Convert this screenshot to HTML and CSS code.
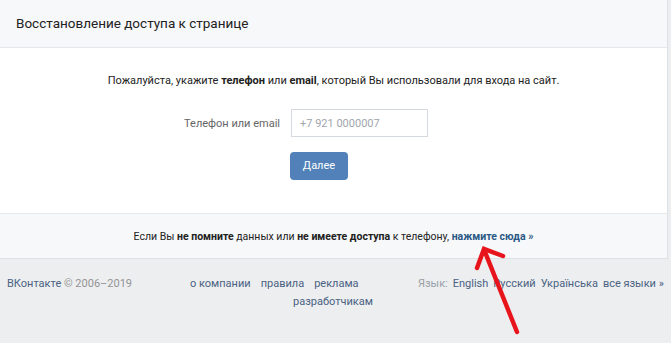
FILE: index.html
```html
<!DOCTYPE html>
<html lang="ru">
<head>
<meta charset="utf-8">
<link rel="stylesheet" href="styles.css">
</head>
<body>
<div class="page">
  <div class="card">
    <div class="card-header">Восстановление доступа к странице</div>
    <div class="card-body">
      <p class="intro">Пожалуйста, укажите <b>телефон</b> или <b>email</b>, который Вы использовали для входа на сайт.</p>
      <div class="form-row">
        <label class="form-label">Телефон или email</label>
        <div class="form-input">+7 921 0000007</div>
      </div>
      <div class="btn-row">
        <span class="btn">Далее</span>
      </div>
    </div>
    <div class="card-note">Если Вы <b>не помните</b> данных или <b>не имеете доступа</b> к телефону, <a class="note-link">нажмите сюда »</a></div>
  </div>
  <div class="footer">
    <div class="copy"><a class="flink">ВКонтакте</a> © 2006–2019</div>
    <div class="links">
      <div class="links-line"><a class="flink">о компании</a><a class="flink">правила</a><a class="flink">реклама</a></div>
      <div class="links-line second"><a class="flink">разработчикам</a></div>
    </div>
    <div class="langs"><span class="lang-label">Язык:</span><a class="flink">English</a><a class="flink">Русский</a><a class="flink">Українська</a><a class="flink">все языки »</a></div>
  </div>
  <svg class="arrow" width="80" height="100" viewBox="0 0 80 100">
    <path d="M54 92 L22 12" stroke="#e8141c" stroke-width="4.5" stroke-linecap="round" fill="none"/>
    <path d="M14 28 L21 9 L40 16" stroke="#e8141c" stroke-width="4.5" stroke-linecap="round" stroke-linejoin="miter" fill="none"/>
  </svg>
</div>
</body>
</html>
```

FILE: styles.css
```css
html, body {
  margin: 0;
  padding: 0;
  background: #edeef0;
}
body {
  font-family: Roboto, "Open Sans", "Noto Sans", sans-serif;
  color: #222;
}
.page {
  position: relative;
  width: 671px;
  height: 343px;
  overflow: hidden;
}
.card {
  width: 667px;
  background: #fff;
  border-right: 1px solid #dce1e6;
  border-bottom: 1px solid #dce1e6;
}
.card-header {
  height: 48px;
  box-sizing: border-box;
  padding: 15px 16px 0;
  font-size: 13.5px;
  color: #222;
  background: #f7f8fa;
  border-bottom: 1px solid #e7e8ec;
}
.card-body {
  height: 166px;
  box-sizing: border-box;
  padding-top: 25px;
  border-bottom: 1px solid #e7e8ec;
}
.intro {
  margin: 0;
  text-align: center;
  font-size: 11px;
  line-height: 16px;
  color: #222;
}
.intro b {
  font-weight: 700;
}
.form-row {
  display: flex;
  align-items: center;
  margin-top: 20px;
}
.form-label {
  width: 291px;
  box-sizing: border-box;
  padding-right: 11px;
  text-align: right;
  white-space: nowrap;
  font-size: 11px;
  color: #656565;
}
.form-input {
  width: 137px;
  height: 28px;
  box-sizing: border-box;
  border: 1px solid #d3d9de;
  padding: 7px 8px 0;
  font-size: 11px;
  color: #a0a6ad;
  background: #fff;
}
.btn-row {
  margin-top: 15px;
  margin-left: 290px;
}
.btn {
  display: inline-block;
  width: 58px;
  height: 28px;
  box-sizing: border-box;
  padding-top: 7px;
  text-align: center;
  background: #5181b8;
  color: #fff;
  font-size: 11px;
  border-radius: 4px;
}
.card-note {
  height: 44px;
  box-sizing: border-box;
  padding-top: 16px;
  text-align: center;
  font-size: 10.5px;
  color: #222;
  background: #f7f8fa;
}
.note-link {
  color: #2a5885;
  font-weight: 700;
}
.footer {
  display: flex;
  padding-top: 16px;
  font-size: 11px;
  line-height: 18px;
  color: #939393;
  white-space: nowrap;
}
.copy {
  width: 190px;
  padding-left: 7px;
  box-sizing: border-box;
}
.flink {
  color: #4a6282;
}
.links {
  width: 228px;
}
.links-line .flink {
  margin-right: 10px;
}
.links-line.second {
  padding-left: 103px;
}
.langs .flink {
  margin-left: 5px;
}
.lang-label {
  color: #9aa0a8;
}
.arrow {
  position: absolute;
  left: 463px;
  top: 240px;
}
```
